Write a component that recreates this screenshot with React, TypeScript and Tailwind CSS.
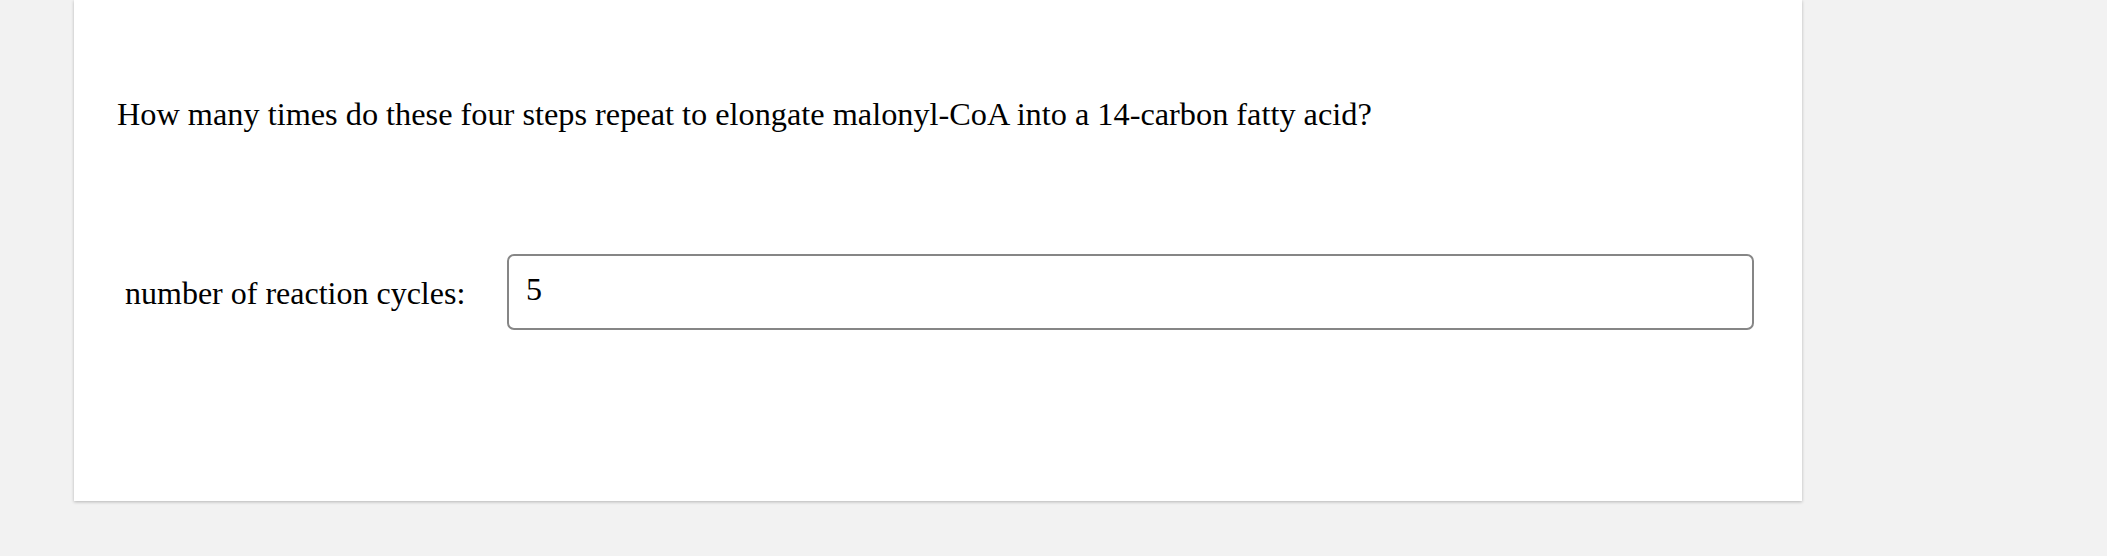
export default function App() {
  return (
    <div className="w-[2107px] h-[556px] bg-[#f2f2f2] overflow-hidden font-['Liberation_Serif','Times_New_Roman',serif]">
      <div className="ml-[74px] w-[1728px] h-[501px] bg-white shadow-[0_1px_3px_rgba(0,0,0,0.25)] pl-[43px] pr-[48px] pt-[96px]">
        <p className="text-[32.3px] leading-[36px] text-black">
          How many times do these four steps repeat to elongate malonyl-CoA into a 14-carbon fatty acid?
        </p>
        <div className="mt-[122px] flex items-start">
          <label className="mt-[21px] ml-[8px] text-[32px] leading-[36px] text-black w-[382px]">number of reaction cycles:</label>
          <input
            readOnly
            value="5"
            className="w-[1247px] h-[76px] box-border border-[2.5px] border-[#868686] rounded-[7px] pl-[17px] pr-[18px] pt-[15px] pb-[21px] [font-family:'Liberation_Serif',serif] text-[32px] leading-[36px] text-black outline-none"
          />
        </div>
      </div>
    </div>
  );
}
